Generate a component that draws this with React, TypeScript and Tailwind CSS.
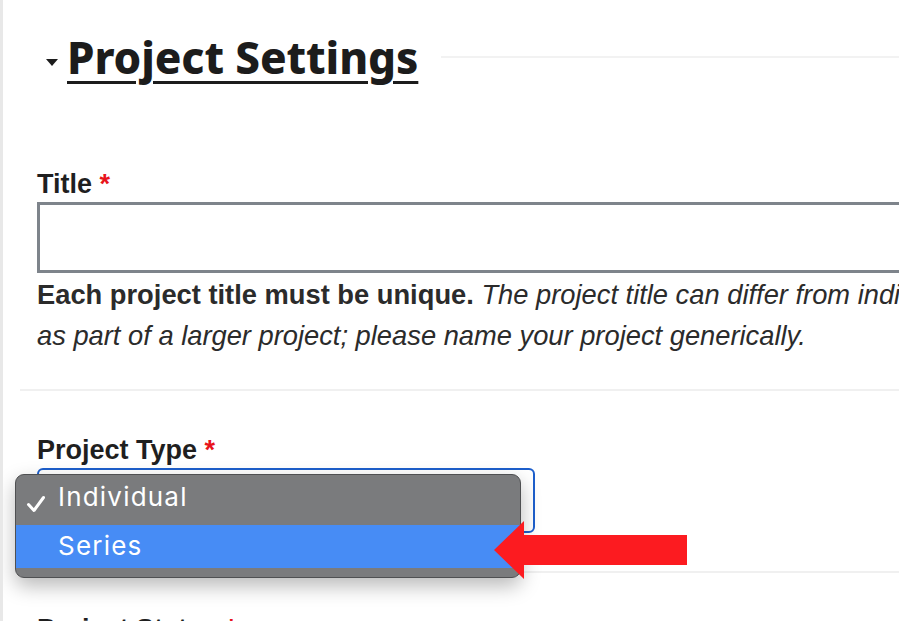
import React from 'react'

const sans = { fontFamily: '"Liberation Sans", Arial, sans-serif' }

function Required() {
  return <span className="text-[#e8141b]"> *</span>
}

function Separator() {
  return <div className="-ml-[17px] h-[2px] bg-[#f0f0f0]" />
}

export default function App() {
  return (
    <div
      className="relative w-[899px] h-[621px] overflow-hidden bg-white border-l-[3px] border-[#e8e8e8]"
      style={sans}
    >
      <div className="pl-[34px]">
        {/* Section header */}
        <div className="mt-[36px] h-[42px] flex items-center">
          <div className="ml-[9px] mt-[11px] w-0 h-0 border-l-[6px] border-r-[6px] border-t-[7px] border-l-transparent border-r-transparent border-t-[#1c1c1c]" />
          <h2
            className="ml-[9px] text-[44px] leading-[42px] font-extrabold tracking-[-0.1px] text-[#1c1c1c] underline decoration-[3px] underline-offset-[7px]"
            style={{ fontFamily: '"Noto Sans", "Open Sans", sans-serif' }}
          >
            Project Settings
          </h2>
          <div className="ml-[23px] flex-1 h-[2px] bg-[#f2f2f2]" />
        </div>

        {/* Title */}
        <label className="block mt-[90px] text-[27px] leading-[32px] font-bold text-[#1f1f1f]">
          Title<Required />
        </label>
        <input
          type="text"
          className="block mt-[2px] w-[900px] h-[71px] border-[3px] border-[#7e848b] bg-white outline-none"
        />
        <p className="mt-[1px] text-[27.3px] leading-[41px] text-[#2b2b2b] whitespace-nowrap">
          <b>Each project title must be unique.</b>{' '}
          <i>The project title can differ from individual work titles, e.g. if a work is released</i>
          <br />
          <i>as part of a larger project; please name your project generically.</i>
        </p>

        <div className="mt-[33px]">
          <Separator />
        </div>

        {/* Project Type */}
        <label className="block mt-[43px] text-[27px] leading-[32px] font-bold text-[#1f1f1f]">
          Project Type<Required />
        </label>
        <div className="mt-[2px] w-[498px] h-[65px] rounded-[6px] border-2 border-[#1d5fcc] bg-white" />

        <div className="mt-[38px]">
          <Separator />
        </div>

        <label className="block mt-[40px] text-[27px] leading-[32px] font-bold text-[#1f1f1f]">
          Project Status<Required />
        </label>
      </div>

      {/* Open select menu */}
      <div
        className="absolute left-[12px] top-[474px] w-[506px] h-[104px] rounded-[9px] bg-[#7a7b7d] border border-[#4f5052] shadow-[0_8px_20px_rgba(0,0,0,0.28)] overflow-hidden text-white"
        style={{ fontFamily: 'Inter, "Open Sans", sans-serif' }}
      >
        <div className="relative h-[50px] pt-[7px] pl-[42px] text-[26px] leading-[30px] tracking-[1.2px]">
          <svg className="absolute left-[10px] top-[20px]" width="20" height="18" viewBox="0 0 20 18">
            <path d="M2.5 9.5 L8 15.5 L17.5 2.5" fill="none" stroke="white" strokeWidth="3" strokeLinecap="round" strokeLinejoin="round" />
          </svg>
          Individual
        </div>
        <div className="h-[43px] pt-[6px] pl-[42px] bg-[#478cf5] text-[26px] leading-[30px] tracking-[1.2px]">
          Series
        </div>
      </div>

      {/* Red arrow annotation */}
      <svg className="absolute left-[491px] top-[521px]" width="193" height="58" viewBox="0 0 193 58">
        <polygon points="0,29 30,0 30,14 193,14 193,44 30,44 30,58" fill="#fc1b20" />
      </svg>
    </div>
  )
}
